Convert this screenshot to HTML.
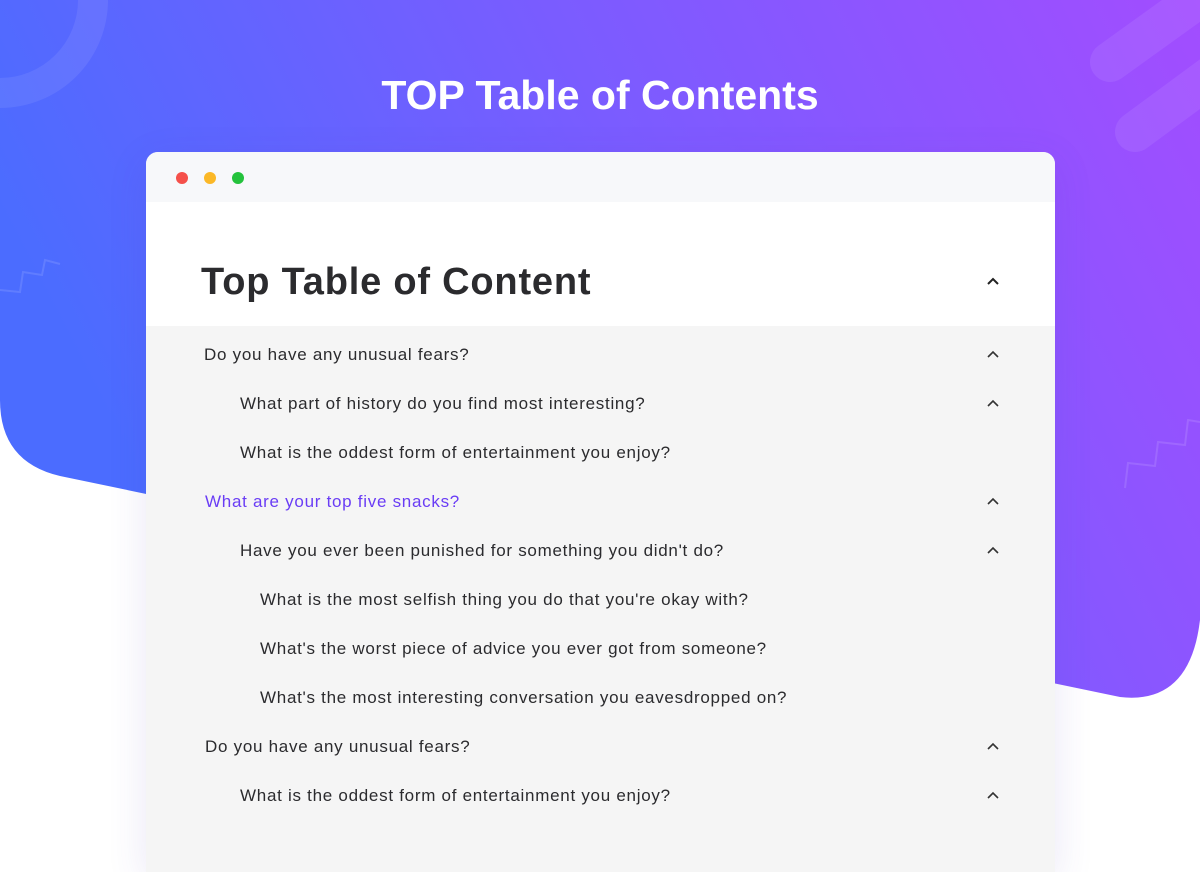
<!DOCTYPE html>
<html><head><style>
*{margin:0;padding:0;box-sizing:border-box}
body{width:1200px;height:840px;overflow:hidden;background:#fff;position:relative;font-family:"Liberation Sans",sans-serif}
svg.bg{position:absolute;left:0;top:0}
h1{position:absolute;top:72px;left:0;width:1200px;text-align:center;color:#fff;font-size:41px;font-weight:bold}
.card{position:absolute;left:146px;top:152px;width:909px;height:720px;background:#f5f5f5;border-radius:12px 12px 0 0;overflow:hidden;box-shadow:0 10px 40px rgba(80,60,180,.12)}
.bar{height:50px;background:#f7f8fa;position:relative}
.dot{position:absolute;top:20px;width:12px;height:12px;border-radius:50%}
.head{height:124px;background:#fff;position:relative}
.head h2{position:absolute;left:55px;top:59px;font-size:38px;font-weight:bold;color:#2b2b2e;letter-spacing:0.8px}
.row{position:absolute;font-size:17px;color:#2b2b2e;left:0;width:909px;height:20px;letter-spacing:0.72px}
.row span{position:absolute;top:0}
.chev{position:absolute;left:841px;top:5px;width:12px;height:8px}
</style></head><body>
<svg class="bg" width="1200" height="840">
<defs><linearGradient id="g" x1="0" y1="0.3" x2="1" y2="0"><stop offset="0" stop-color="#4b6cff"/><stop offset="0.5" stop-color="#7a5cff"/><stop offset="1" stop-color="#a24dff"/></linearGradient></defs>
<path d="M0 0H1200V620Q1190 705 1120 697L60 476Q0 462 0 400Z" fill="url(#g)"/>
<circle cx="0" cy="0" r="93" fill="none" stroke="#fff" stroke-opacity=".08" stroke-width="30"/>
<g stroke="#fff" stroke-opacity=".08" stroke-width="40" stroke-linecap="round"><line x1="1110" y1="62" x2="1210" y2="-10"/><line x1="1135" y1="132" x2="1230" y2="62"/></g>
<polyline points="0,290 20,292 23,272 42,275 45,260 60,264" fill="none" stroke="#fff" stroke-opacity=".12" stroke-width="2"/>
<polyline points="1125,488 1128,463 1155,466 1158,442 1185,445 1188,420 1200,422" fill="none" stroke="#fff" stroke-opacity=".12" stroke-width="2"/>
</svg>
<h1>TOP Table of Contents</h1>
<div class="card">
<div class="bar"><div class="dot" style="left:30px;background:#f5504a"></div><div class="dot" style="left:58px;background:#fbb827"></div><div class="dot" style="left:86px;background:#24c23c"></div></div>
<div class="head"><h2>Top Table of Content</h2>
<svg class="chev" style="top:75px" viewBox="0 0 12 8"><path d="M1 7L6 2L11 7" fill="none" stroke="#222" stroke-width="2"/></svg></div>
<div class="row" style="top:193px"><span style="left:58px">Do you have any unusual fears?</span><svg class="chev" viewBox="0 0 12 8"><path d="M1 7L6 2L11 7" fill="none" stroke="#333" stroke-width="1.6"/></svg></div>
<div class="row" style="top:242px"><span style="left:94px">What part of history do you find most interesting?</span><svg class="chev" viewBox="0 0 12 8"><path d="M1 7L6 2L11 7" fill="none" stroke="#333" stroke-width="1.6"/></svg></div>
<div class="row" style="top:291px"><span style="left:94px">What is the oddest form of entertainment you enjoy?</span></div>
<div class="row" style="top:340px;color:#6a3df5"><span style="left:59px">What are your top five snacks?</span><svg class="chev" viewBox="0 0 12 8"><path d="M1 7L6 2L11 7" fill="none" stroke="#333" stroke-width="1.6"/></svg></div>
<div class="row" style="top:389px"><span style="left:94px">Have you ever been punished for something you didn't do?</span><svg class="chev" viewBox="0 0 12 8"><path d="M1 7L6 2L11 7" fill="none" stroke="#333" stroke-width="1.6"/></svg></div>
<div class="row" style="top:438px"><span style="left:114px">What is the most selfish thing you do that you're okay with?</span></div>
<div class="row" style="top:487px"><span style="left:114px">What's the worst piece of advice you ever got from someone?</span></div>
<div class="row" style="top:536px"><span style="left:114px">What's the most interesting conversation you eavesdropped on?</span></div>
<div class="row" style="top:585px"><span style="left:59px">Do you have any unusual fears?</span><svg class="chev" viewBox="0 0 12 8"><path d="M1 7L6 2L11 7" fill="none" stroke="#333" stroke-width="1.6"/></svg></div>
<div class="row" style="top:634px"><span style="left:94px">What is the oddest form of entertainment you enjoy?</span><svg class="chev" viewBox="0 0 12 8"><path d="M1 7L6 2L11 7" fill="none" stroke="#333" stroke-width="1.6"/></svg></div>
</div>
</body></html>
